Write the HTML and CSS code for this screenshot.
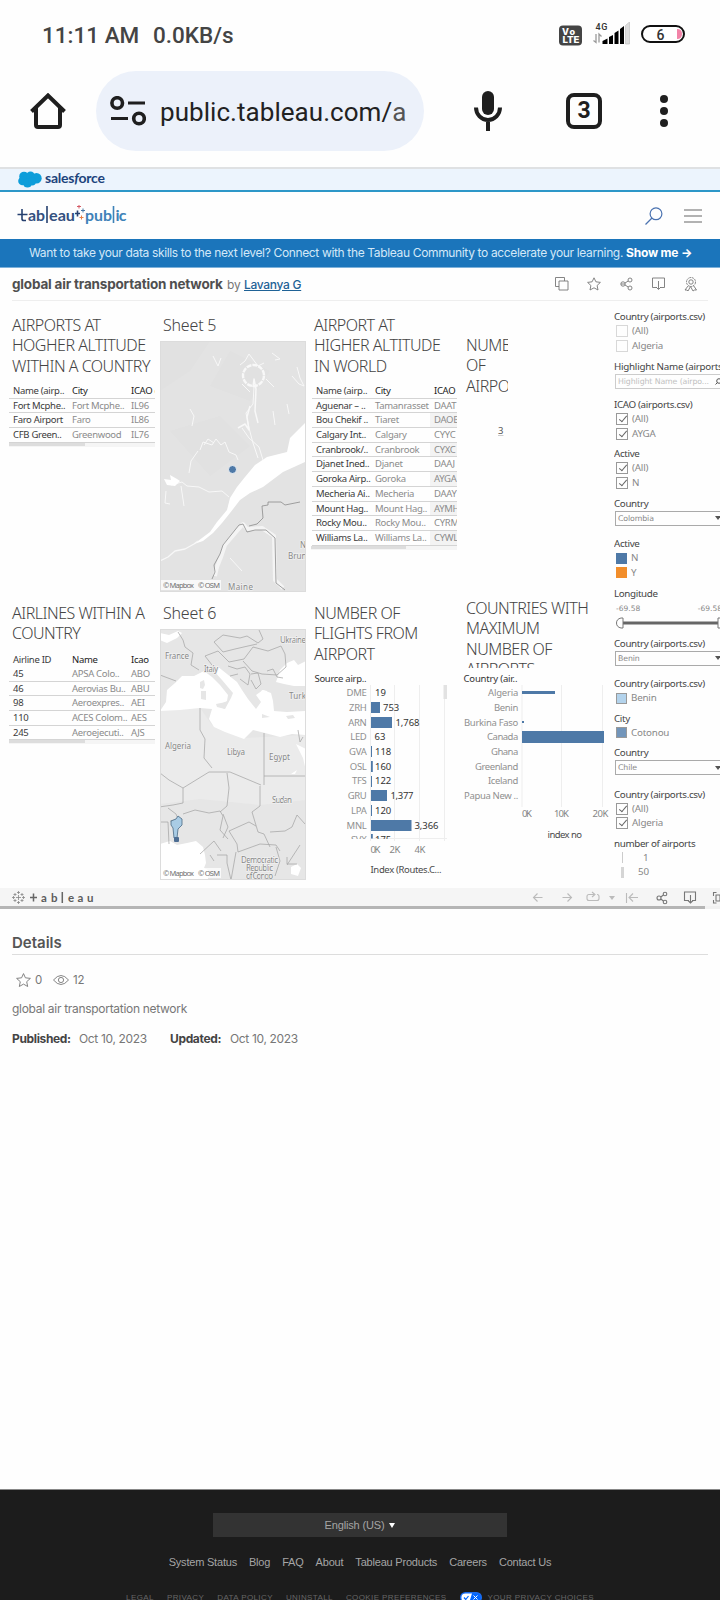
FILE: index.html
```html
<!DOCTYPE html>
<html lang="en">
<head>
<meta charset="utf-8">
<title>global air transportation network</title>
<link rel="stylesheet" href="styles.css">
</head>
<body>
<div class="status">
  <span class="clock">11:11 AM</span><span class="speed">0.0KB/s</span>
  <svg class="status-icons" width="127" height="24" viewBox="0 0 127 24">
    <rect x="0" y="3.500" width="23" height="20" rx="4" fill="#444"/>
    <g font-family="Inter" font-weight="800" fill="#fff" font-size="9"><text x="3" y="12.500" textLength="13">Vo</text><text x="3.500" y="21" textLength="17" lengthAdjust="spacingAndGlyphs">LTE</text></g>
    <text x="36.500" y="7.500" font-family="Roboto" font-size="9" font-weight="500" fill="#333" textLength="12">4G</text>
    <path d="M37 12v8.500l-2.500-2M40 20.500V12l2.500 2.500" fill="none" stroke="#999" stroke-width="1.300"/>
    <path d="M43.500 22v-3l5-2.500V22zM50 22v-7l4-2v9zM55.500 22V11l4-2.500V22zM61 22V7l4-3v18z" fill="#000"/>
    <path d="M66.500 22V3.500l4-3.500v22z" fill="#ddd" stroke="#bbb" stroke-width=".6"/>
    <rect x="83" y="4" width="42" height="16" rx="8" fill="#fff" stroke="#111" stroke-width="2"/>
    <path d="M118 7q5 0 5 5t-5 5z" fill="#f283a8"/>
    <text x="97.500" y="18" font-family="Roboto" font-size="14" fill="#333">6</text>
  </svg>
</div>
<div class="browser">
  <svg class="home" width="36" height="36" viewBox="0 0 36 36" fill="none" stroke="#1f1f1f" stroke-width="4"><path d="M1.500 18.500 18 2.500l16.500 16" /><path d="M6 15v17q0 2 2 2h20q2 0 2-2V15"/></svg>
  <div class="omnibox">
    <svg width="36" height="30" viewBox="0 0 36 30" fill="none" stroke="#1f1f1f" stroke-width="3.600"><circle cx="7.200" cy="7" r="5.300"/><path d="M18 7h17M1 22.500h17" stroke-width="3.200"/><circle cx="29" cy="22.500" r="5.300"/></svg>
    <span class="url">public.tableau.com/<span class="fade">a</span></span>
  </div>
  <svg class="mic" width="28" height="40" viewBox="0 0 28 40"><rect x="8" y="0" width="12" height="24" rx="6" fill="#1f1f1f"/><path d="M2 16.500a12 12.500 0 0 0 24 0M14 29v11" fill="none" stroke="#1f1f1f" stroke-width="4"/></svg>
  <span class="tabs">3</span>
  <svg class="dots" width="8" height="32" viewBox="0 0 8 32" fill="#1f1f1f"><circle cx="4" cy="4" r="4"/><circle cx="4" cy="16" r="4"/><circle cx="4" cy="28" r="4"/></svg>
</div>
<div class="salesforce">
  <svg width="24" height="17" viewBox="0 0 24 17" fill="#0d9dda"><circle cx="6" cy="5.500" r="4.800"/><circle cx="12.500" cy="4.800" r="4.300"/><circle cx="18.500" cy="7.200" r="5.200"/><circle cx="4.500" cy="10" r="4.300"/><circle cx="9.500" cy="12" r="4.600"/><circle cx="14" cy="10.500" r="4"/></svg>
  <span>sales<i>f</i>orce</span>
</div>
<header class="header">
  <svg class="logo" width="110" height="22" viewBox="0 0 110 22">
    <g fill="none" stroke="#26406f" stroke-width="1.600"><path d="M5 4v10q0 1.500 2 1.500h2M.5 9.500h10M30 1v17M60.500 5.500v6M58 8.500h5"/></g>
    <g font-family="Lato" font-weight="700" font-size="16"><text x="11" y="15.500" fill="#33507f" textLength="17" lengthAdjust="spacingAndGlyphs">ab</text><text x="32" y="15.500" fill="#33507f" textLength="26" lengthAdjust="spacingAndGlyphs">eau</text><text x="68" y="15.500" fill="#3e82b8" textLength="27" lengthAdjust="spacingAndGlyphs">pub</text><text x="98.500" y="15.500" fill="#3e82b8" textLength="11">ic</text></g>
    <path d="M96.500 1v17" stroke="#3e82b8" stroke-width="1.600"/>
    <path d="M60 1.500h4M62 -.5v4" stroke="#d45b67"/><path d="M62.500 12.500h4M64.500 10.500v4" stroke="#e88046"/><path d="M64 5.500h4M66 3.500v4" stroke="#4778a5"/>
  </svg>
  <svg class="search" width="18" height="18" viewBox="0 0 18 18" fill="none" stroke="#4a72b0" stroke-width="1.200"><circle cx="11" cy="6.800" r="5.900"/><path d="m7 11-6.500 6.500"/></svg>
  <svg width="18" height="14" viewBox="0 0 18 14" stroke="#666" stroke-width="1.200"><path d="M0 1h18M0 7h18M0 13h18"/></svg>
</header>
<div class="banner"><span>Want to take your data skills to the next level? Connect with the Tableau Community to accelerate your learning.</span> <b>Show me →</b></div>
<div class="title">
  <h1>global air transportation network</h1><span class="by">by</span><a>Lavanya G</a>
  <svg class="actions" width="144" height="15" viewBox="0 0 144 15" fill="none" stroke="#777" stroke-width=".9">
    <path d="M4 9.500H.5v-9h9V4M4 4h9v9H4z"/>
    <path d="m39 .8 1.900 4 4.500.6-3.300 3.100.9 4.500-4-2.200-4 2.200.9-4.500-3.300-3.100 4.500-.6z"/>
    <circle cx="68" cy="7" r="2.200"/><circle cx="75" cy="3" r="2"/><circle cx="75" cy="11" r="2"/><path d="m70 6 3.200-2M70 8l3.200 2M66 7h4"/>
    <path d="M102 10.500h-4.500V1h12v9.500H105M103.500 4v8M101 10l2.500 2.500L106 10"/>
    <circle cx="136" cy="5" r="2.200"/><circle cx="136" cy="5" r="4.500" stroke-dasharray="2 .7"/><path d="m133 9-3 4h2l1 1 2.500-4.500L138 14l1.500-1h2l-3-4.500"/>
  </svg>
</div>

<main class="dash">
  <section class="sheet">
    <h2>AIRPORTS AT<br>HOGHER ALTITUDE<br>WITHIN A COUNTRY</h2>
    <div class="table">
      <div class="tr th"><span>Name (airp..</span><span>City</span><span>ICAO code</span></div>
      <div class="tr"><span>Fort Mcphe..</span><span>Fort Mcphe..</span><span>IL96</span></div>
      <div class="tr"><span>Faro Airport</span><span>Faro</span><span>IL86</span></div>
      <div class="tr"><span>CFB Green..</span><span>Greenwood</span><span>IL76</span></div>
      <div class="scroll"><i></i></div>
    </div>
  </section>
  <section class="sheet map">
    <h2>Sheet 5</h2>
    <svg width="146" height="251" viewBox="0 0 146 251">
      <rect width="146" height="251" fill="#e3e3e3"/>
      <g fill="#e1e1e1"><path d="M0 0h50L30 30 0 50zM70 10l40 20-20 30-40-15zM10 90l50-15 30 30-40 30z"/></g>
      <path d="M145 82 139 88 130 97 127 111 107 116 95 124 85 136 77 146 70 157 67 169 57 181 50 191 42 197 34 203 43 200 53 192 62 182 70 172 80 159 90 152 103 146 123 131 145 121z" fill="#fff"/>
      <g fill="none" stroke="#f8f8f8" stroke-linejoin="round">
        <path d="m38 200-4 3-9 5-10 2-7 6-8 4" stroke-width="1.300"/><path d="m69 156-7-6-13 1-10-5-12-1-5-4-11 3M103 119l-4-13-10-9-7-10M98 117l-5-15-4-15-3-15 7-9 1-17"/>
        <path d="m40 109 3-8 9 3 4-6 5 6 4-3 4 10 7 3 2 5M44 104l4-6 6 4M29 132l2-12 7-10"/>
        <path d="m78 87 7-4 4 6-2-13 3-11M93 46l1-8 2 10-1 22 3 12" stroke-width="1.500"/>
        <path d="m30 68 4 7-2 10M53 15l5 10 3-8M112 12l8 6-5 1M132 35l7 8 5 2-4-8-3-11M113 70l2 14M127 63l2 10M6 150l-1 12 5 1M21 145l3 20M70 217l12 13M80 24l5-4 4-7 9 12 6-3M82 43l8 8M106 38l8 8"/>
        <circle cx="93.500" cy="34.500" r="10.500" stroke-width="2.400" stroke-dasharray="5 1"/>
      </g>
      <path d="m4 138 7 1-1-5 7 4 3 2-5 5-8-1z" fill="#fff"/>
      <g fill="none" stroke-linejoin="round"><path d="m55 235 2-9 4-10 4-12 18-21 4 5 15-1 12 8 1 44 8 8" stroke="#f4f4f4" stroke-width="4"/><path d="m52 238 3-7-1-7 6-11 3-9 16-20 4-1 4 8 8-2 11 0 9 8 1 45 9 7M89 185l8-2 6-6-1-12 6-1v-3h13l4 3 15-3" stroke="#8c8c8c" stroke-width=".8"/></g>
      <circle cx="72.500" cy="128.500" r="4" fill="#4e79a7" stroke="#fff" stroke-width=".8"/>
      <g class="place"><text x="68" y="249" textLength="25">Maine</text><text x="140" y="207">N</text><text x="128" y="218">Bruns</text></g>
      <rect x="1" y="239" width="60" height="10" fill="#fff" opacity=".75"/><g class="credit"><text x="3" y="247" textLength="31">© Mapbox</text><text x="38" y="247" textLength="22">© OSM</text></g>
      <rect x=".5" y=".5" width="145" height="250" fill="none" stroke="#dcdcdc"/>
    </svg>
  </section>
  <section class="sheet">
    <h2>AIRPORT AT<br>HIGHER ALTITUDE<br>IN WORLD</h2>
    <div class="table wide">
      <div class="tr th"><span>Name (airp..</span><span>City</span><span>ICAO code</span></div>
      <div class="tr"><span>Aguenar – ..</span><span>Tamanrasset</span><span>DAAT</span></div>
      <div class="tr"><span>Bou Chekif ..</span><span>Tiaret</span><span>DAOB</span></div>
      <div class="tr"><span>Calgary Int..</span><span>Calgary</span><span>CYYC</span></div>
      <div class="tr"><span>Cranbrook/..</span><span>Cranbrook</span><span>CYXC</span></div>
      <div class="tr"><span>Djanet Ined..</span><span>Djanet</span><span>DAAJ</span></div>
      <div class="tr"><span>Goroka Airp..</span><span>Goroka</span><span>AYGA</span></div>
      <div class="tr"><span>Mecheria Ai..</span><span>Mecheria</span><span>DAAY</span></div>
      <div class="tr"><span>Mount Hag..</span><span>Mount Hag..</span><span>AYMH</span></div>
      <div class="tr"><span>Rocky Mou..</span><span>Rocky Mou..</span><span>CYRM</span></div>
      <div class="tr"><span>Williams La..</span><span>Williams La..</span><span>CYWL</span></div>
      <div class="scroll"><i></i></div>
    </div>
  </section>
  <section class="sheet count">
    <h2>NUMBER<br>OF<br>AIRPORTS</h2>
    <span class="num">3</span>
  </section>

  <section class="sheet second">
    <h2>AIRLINES WITHIN A<br>COUNTRY</h2>
    <div class="table short">
      <div class="tr th"><span>Airline ID</span><span>Name</span><span>Icao</span></div>
      <div class="tr"><span>45</span><span>APSA Colo..</span><span>ABO</span></div>
      <div class="tr"><span>46</span><span>Aerovias Bu..</span><span>ABU</span></div>
      <div class="tr"><span>98</span><span>Aeroexpres..</span><span>AEI</span></div>
      <div class="tr"><span>110</span><span>ACES Colom..</span><span>AES</span></div>
      <div class="tr"><span>245</span><span>Aeroejecuti..</span><span>AJS</span></div>
      <div class="scroll"><i></i></div>
    </div>
  </section>
  <section class="sheet second map">
    <h2>Sheet 6</h2>
    <svg width="146" height="251" viewBox="0 0 146 251">
      <rect width="146" height="251" fill="#e6e6e6"/>
      <path d="M0 82 40 79l12 17 31 13 63-3v65L100 176l-60-6L0 175z" fill="#ebebeb"/>
      <path d="M0 82 6 73 7 61 15 54 22 47 34 47 44 42 52 48 60 56 68 66 67 72 57 77 65 80 71 69 73 64 62 51 54 42 57 37 67 45 77 53 82 61 88 70 96 80 101 73 96 66 103 61 111 64 113 72 114 82 127 83 145 82V106L132 105 120 108 105 104 93 101 84 110 65 103 54 98 49 90 52 80 40 79 20 81z" fill="#fff"/>
      <path d="M102 61l5 1 2 9-6 3-4-7M0 4l9 2 9-4 4 2-5 5-10 5-5-2-2-1zM116 53l4-12 7-7 7-3 4 5 8-4v25l-12 0-10-2zM0 215l10-3 7 4 10-2 9-2 7 6 2 8 1 8-2 5 4 2v11l-12-2H0zM136 115l7 14 3 13v-22zM131 145l6-4-2 4zM131 238l6-3 4 4-3 8-7-2z" fill="#fff"/>
      <path d="m40 53 4-2 1 5-2 4-3-1zM41 62l5 0 0 9-5-1zM56 75l10-2-1 7-8-2zM102 85l8 3-8 1zM126 87l7-1 2 3-7 1z" fill="#e6e6e6"/>
      <g fill="none" stroke="#a5a5a5" stroke-width=".75" stroke-linejoin="round">
        <path d="m18 3 5 8 2 7 8 6-2 12 8 5M0 46l16 6M54 13l9-7 17 3 7-2 11 7 5-4-4-9M54 13l9 10 12-3 13-3 9-2M45 27l13-5 11 11 15-3 9-12 15 4 13-5 4 8 1 13-9 8-15-1-10-3-9-10M68 37l9 3 8-2 5 7-2 11-8-6M91 45l7-1 3 11-5 5-5-9M107 42l6-2 4 8 6 1M40 79l0 22 5 9-1 19 8 10M104 104v52M104 147h42M0 144l9 7 14 8 26-16h21l31 13M23 159v15l-10 2-14 2M23 185l12-4 14 3 11-2 3 5-3 14 8 9M67 144l2 15-2 18-7 6M100 157v20l-8 6 6 20 6 2 6 13M63 185l5 13-5 11M69 202l20-9 7 4M69 202l8 13 1 8 22-8 16 1 4 6M110 203l15-1 7-4 5-12 8 9M40 225l14-13 7 10M50 226l4 6M57 226h10v8l4 17M76 223l-5 28M116 218l4 14-5 15M127 236l13-20M8 179l8 6 2 5-8 2M0 193l8 0 1 22M138 101l2 12 3-5M127 228v7h10M70 47l8-2M45 27l7 9"/>
      </g>
      <path d="M18 187 22 190 22 196 18 200 17 209 14 209 13 199 11 196 11 192 16 190z" fill="#a9cce5" stroke="#4a6984" stroke-width=".8"/><rect x="14" y="208" width="5" height="5" rx="1" fill="#4d6d93"/>
      <g class="place"><text x="5" y="29.500" textLength="24">France</text><text x="44" y="43" textLength="14">Italy</text><text x="120" y="14" textLength="26">Ukraine</text><text x="129" y="70" textLength="17">Turk</text><text x="5" y="119.500" textLength="26">Algeria</text><text x="67" y="125.500" textLength="18">Libya</text><text x="109" y="130.500" textLength="21">Egypt</text><text x="112" y="174" textLength="20">Sudan</text><text x="81" y="233.500" textLength="37">Democratic</text><text x="86" y="242" textLength="27">Republic</text><text x="86" y="250" textLength="27">of Congo</text></g>
      <rect x="1" y="239" width="60" height="10" fill="#fff" opacity=".75"/><g class="credit"><text x="3" y="247" textLength="31">© Mapbox</text><text x="38" y="247" textLength="22">© OSM</text></g>
      <rect x=".5" y=".5" width="145" height="250" fill="none" stroke="#dcdcdc"/>
    </svg>
  </section>
  <section class="sheet second">
    <h2>NUMBER OF<br>FLIGHTS FROM<br>AIRPORT</h2>
    <svg class="chart" width="146" height="208" viewBox="311 672 146 208">
      <text class="dark" x="314.500" y="681.800" textLength="52" >Source airp..</text>
      <path d="M370.500 685v156M394.500 685v156M419.500 685v156M444.500 685v156M370 838.500h77" stroke="#eee"/>
      <rect x="443.500" y="685" width="3.500" height="14" fill="#e2e2e2"/>
      <g fill="#4e79a7"><path d="M371 702h9v11h-9zM371 717h21v11h-21zM371 746h1v11h-1zM371 761h1.800v11H371zM371 776h1v11h-1zM371 790h16v11h-16zM371 805h1v11h-1zM371 820h40.500v11H371zM371 834h1.800v4.500H371z"/></g>
      <g class="lab"><text x="366.500" y="696">DME</text><text x="366.500" y="711">ZRH</text><text x="366.500" y="725.500">ARN</text><text x="366.500" y="740">LED</text><text x="366.500" y="755">GVA</text><text x="366.500" y="769.500">OSL</text><text x="366.500" y="784">TFS</text><text x="366.500" y="799">GRU</text><text x="366.500" y="813.500">LPA</text><text x="366.500" y="828.500">MNL</text></g>
      <g class="val"><text x="375" y="696">19</text><text x="383" y="711">753</text><text x="395.500" y="725.500" textLength="24">1,768</text><text x="374.500" y="740">63</text><text x="375" y="755">118</text><text x="375" y="769.500">160</text><text x="375" y="784">122</text><text x="390.500" y="799" textLength="23">1,377</text><text x="375" y="813.500">120</text><text x="414.500" y="828.500" textLength="24">3,366</text></g>
      <svg x="311" y="832" width="132" height="7" viewBox="311 832 132 7"><g class="lab"><text x="366.500" y="843">SVX</text></g><g class="val"><text x="375" y="843">175</text></g></svg>
      <g class="axis"><text x="370.500" y="853" textLength="10">0K</text><text x="389.500" y="853" textLength="11">2K</text><text x="414.500" y="853" textLength="11">4K</text></g>
      <text class="dark soft" x="370.500" y="873" textLength="71">Index (Routes.C...</text>
    </svg>
  </section>
  <section class="sheet second countries">
    <h2>COUNTRIES WITH<br>MAXIMUM<br>NUMBER OF<br>AIRPORTS</h2>
    <svg class="chart" width="153" height="208" viewBox="461 672 153 208">
      <text class="dark" x="463.500" y="681.800" textLength="54">Country (air..</text>
      <path d="M522 685v122M561.500 685v122M602.500 685v122" stroke="#eee"/>
      <path d="M522 691h33v3h-33zM522 721h2v2h-2zM522 731h82v12h-82z" fill="#4e79a7"/>
      <g class="lab"><text x="518" y="696" textLength="30">Algeria</text><text x="518" y="711" textLength="24">Benin</text><text x="518" y="725.500" textLength="54">Burkina Faso</text><text x="518" y="740" textLength="31">Canada</text><text x="518" y="755" textLength="27">Ghana</text><text x="518" y="769.500" textLength="43">Greenland</text><text x="518" y="784" textLength="30">Iceland</text><text x="518" y="799" textLength="54">Papua New ..</text></g>
      <g class="axis"><text x="522" y="817" textLength="10">0K</text><text x="554" y="817" textLength="15">10K</text><text x="592.500" y="817" textLength="16">20K</text></g>
      <text class="dark soft" x="547.500" y="838" textLength="34.500">index no</text>
    </svg>
  </section>

  <aside class="filters">
    <div><h3>Country (airports.csv)</h3><p><i class="cb"></i>(All)</p><p><i class="cb"></i>Algeria</p></div>
    <div><h3 class="long">Highlight Name (airports.csv)</h3><div class="field hint"><span>Highlight Name (airpo...</span><svg width="7" height="7" viewBox="0 0 7 7" fill="none" stroke="#555"><circle cx="4" cy="3" r="2.300"/><path d="m2.500 4.500-2 2"/></svg></div></div>
    <div><h3>ICAO (airports.csv)</h3><p><i class="cb on"></i>(All)</p><p><i class="cb on"></i>AYGA</p></div>
    <div><h3>Active</h3><p><i class="cb on"></i>(All)</p><p><i class="cb on"></i>N</p></div>
    <div><h3>Country</h3><div class="field"><span>Colombia</span><b></b></div></div>
    <div><h3>Active</h3><p><i class="sw blue"></i>N</p><p><i class="sw orange"></i>Y</p></div>
    <div><h3>Longitude</h3><div class="range"><span>-69.58</span><span>-69.58</span></div><svg width="106" height="14" viewBox="0 0 106 14"><path d="M9 7h96" stroke="#666" stroke-width="3"/><path d="M9 2H7Q2.500 3 2.500 7T7 12h2zM104 2h3v10h-3z" fill="#fff" stroke="#777"/></svg></div>
    <div><h3>Country (airports.csv)</h3><div class="field"><span>Benin</span><b></b></div></div>
    <div><h3>Country (airports.csv)</h3><p><i class="sw pale"></i>Benin</p></div>
    <div><h3>City</h3><p><i class="sw steel"></i>Cotonou</p></div>
    <div><h3>Country</h3><div class="field"><span>Chile</span><b></b></div></div>
    <div><h3>Country (airports.csv)</h3><p><i class="cb on"></i>(All)</p><p><i class="cb on"></i>Algeria</p></div>
    <div><h3>number of airports</h3><p class="size"><i></i>1</p><p class="size big"><i></i>50</p></div>
  </aside>
</main>
<div class="toolbar">
  <svg width="13" height="13" viewBox="0 0 13 13" stroke="#888" stroke-width=".8"><path d="M6.500 4v5M4 6.500h5M6.500 0v3M5 1.500h3M6.500 10v3M5 11.500h3M1.500 5v3M0 6.500h3M11.500 5v3M10 6.500h3M3 2v3M1.500 3.500h3M10 2v3M8.500 3.500h3M3 8v3M1.500 9.500h3M10 8v3M8.500 9.500h3"/></svg>
  <svg class="word" width="66" height="13" viewBox="0 0 66 13"><path d="M4.500 2.500v8M1 6.500h7M33.300 1v11" stroke="#666" stroke-width="1.500"/><g font-family="Lato" font-weight="700" font-size="11.500" fill="#5c5c5c"><text x="12" y="10.500">a</text><text x="22" y="10.500">b</text><text x="39" y="10.500">e</text><text x="48.500" y="10.500">a</text><text x="58" y="10.500">u</text></g></svg>
  <svg class="tools" width="188" height="15" viewBox="0 0 188 15" fill="none" stroke="#bbb" stroke-width="1.100">
    <path d="M10.500 7.500h-9M5.500 3.500l-4 4 4 4M30.500 7.500h9M35.500 3.500l4 4-4 4M62 4.500h-5q-2 0-2 2v2q0 2 2 2h8q2 0 2-2v-2q0-2-2-2M60 2l3 2.500L60 7M94.500 3v10M106 7.500h-9M101 3.500l-4 4 4 4"/><path d="M77 6h6l-3 4z" fill="#bbb" stroke="none"/>
    <g stroke="#777"><circle cx="127" cy="8" r="2"/><circle cx="133" cy="4" r="1.800"/><circle cx="133" cy="12" r="1.800"/><path d="m128.800 7 2.600-2M128.800 9l2.600 2"/><path d="M157 10.500h-4.500V2h11v8.500H160M158.500 5v8M156 10.500l2.500 2.500 2.500-2.500"/><path d="M181.500 6V2.500h3M181.500 10v3h3M184 5h4v6h-4z"/></g>
  </svg>
</div>
<div class="hscroll"><i></i></div>
<section class="details">
  <h2>Details</h2>
  <div class="stats">
    <svg width="15" height="14" viewBox="31.500 .2 15 14" fill="none" stroke="#777" stroke-width=".9"><path d="m39 .8 1.900 4.200 5 .6-3.700 3.300 1 4.800-4.200-2.400-4.200 2.400 1-4.800-3.700-3.300 5-.6z"/></svg><span class="s0">0</span>
    <svg width="16" height="10" viewBox="0 0 16 10" fill="none" stroke="#777" stroke-width=".9"><path d="M.5 5q7.500-9 15 0-7.500 9-15 0z"/><circle cx="8" cy="5" r="2.600"/></svg><span class="s1">12</span>
  </div>
  <p class="desc">global air transportation network</p>
  <p class="dates"><b>Published:</b><span>Oct 10, 2023</span><b class="upd">Updated:</b><span>Oct 10, 2023</span></p>
</section>
<footer>
  <div class="lang">English (US) <i></i></div>
  <nav><a>System Status</a><a>Blog</a><a>FAQ</a><a>About</a><a>Tableau Products</a><a>Careers</a><a>Contact Us</a></nav>
  <nav class="legal"><a>LEGAL</a><a>PRIVACY</a><a>DATA POLICY</a><a>UNINSTALL</a><a>COOKIE PREFERENCES</a><svg width="22" height="11" viewBox="0 0 22 11"><rect x=".7" y=".7" width="20.600" height="9.600" rx="4.800" fill="#06f" stroke="#1a6cf0" stroke-width="1.400"/><path d="M5.500 1.400H12L9.500 9.600h-4a4 4 0 0 1 0-8.200" fill="#fff"/><path d="m4 5.500 1.700 2L8.500 4" fill="none" stroke="#06f" stroke-width="1.200"/><path d="m13.500 3.500 4 4m0-4-4 4" stroke="#fff"/></svg><a class="choices">YOUR PRIVACY CHOICES</a></nav>
</footer>
</body>
</html>
```
FILE: styles.css
```css
* { box-sizing: border-box; }
html, body { overflow: hidden; }
body { margin: 0; width: 720px; height: 1600px; background: #fefefe; font-family: Inter, sans-serif; color: #555; display: flex; flex-direction: column; }
h1, h2, h3, p { margin: 0; font-weight: 400; }
svg { display: block; flex: none; }

.status { height: 71px; display: flex; align-items: flex-start; padding: 22px 0 0 42px; font: 500 22.500px/27px Roboto, sans-serif; color: #444; white-space: nowrap; }
.clock { width: 111px; flex: none; }
.speed { width: 406px; flex: none; }
.browser { height: 96px; display: flex; align-items: flex-start; padding-left: 30px; }
.home { margin-top: 22px; }
.omnibox { width: 328px; height: 80px; border-radius: 40px; background: #ecf1fa; margin-left: 30px; display: flex; align-items: center; padding-left: 14px; }
.url { margin-left: 14px; font: 400 26px/30px Roboto, sans-serif; color: #222; padding-top: 2px; letter-spacing: .05px; }
.fade { color: #555; }
.mic { margin: 20px 0 0 50px; }
.tabs { width: 36px; height: 36px; border: 4px solid #1f1f1f; border-radius: 8px; margin: 22px 0 0 64px; font: 700 23px/28px Roboto, sans-serif; color: #1f1f1f; text-align: center; }
.dots { margin: 24px 0 0 58px; }

.salesforce { height: 25px; border-top: 2px solid #dfe1e3; border-bottom: 2px solid #2d97c8; background: #ecf4fd; display: flex; align-items: center; padding-left: 18px; color: #1c437c; font: 400 14px/18px Lato, sans-serif; }
.salesforce span { margin: -3px 0 0 3px; font-weight: 700; letter-spacing: -.25px; }
.header { height: 47px; display: flex; align-items: center; padding-left: 17px; }
.search { margin: 0 21px 0 518px; }
.banner { height: 29px; background: #1b75bb; color: #d3e8f8; font-size: 12px; line-height: 28px; white-space: nowrap; padding-left: 29px; border-bottom: 1px solid #7db1da; letter-spacing: -.35px; }
.banner b { color: #fff; font-weight: 700; letter-spacing: -.2px; }
.title { height: 33px; margin: 0 12px; border-bottom: 1px solid #eee; display: flex; align-items: center; white-space: nowrap; }
h1 { font-size: 13.500px; font-weight: 700; letter-spacing: -.18px; color: #4f4f4f; width: 215px; flex: none; }
.by { font-size: 12px; color: #777; width: 17px; flex: none; }
.title a { font-size: 12px; color: #1f6296; font-weight: 500; text-decoration: underline; letter-spacing: -.3px; }
.actions { margin: 0 9px 0 auto; }

.dash { height: 587px; display: grid; grid-template-columns: 151px 151px 150px 153px 106px; grid-template-rows: 293px 294px; padding-left: 9px; font-family: "Noto Sans", sans-serif; }
.sheet { padding-top: 14px; overflow: hidden; }
.sheet h2 { font: 300 16px/20.400px "Noto Sans", "Open Sans", sans-serif; letter-spacing: -.5px; color: #444; padding-left: 3px; height: 69px; white-space: nowrap; }
.second { padding-top: 9px; }
.map h2 { height: 26px; letter-spacing: -.2px; }
.table { width: 146px; overflow: hidden; font-size: 9.500px; }
.tr { display: grid; grid-template-columns: 59px 59px 60px; height: 14.700px; line-height: 13.600px; border-bottom: 1px solid #d4d4d4; color: #8b8b8b; letter-spacing: -.3px; }
.tr span { padding-left: 4px; white-space: nowrap; }
.tr span:first-child { color: #3a3a3a; }
.th, .th span { color: #222; }
.wide .tr { margin-left: 1px; }
.wide .tr:nth-child(2n+3) span:last-child { background: #f3f3f3; }
.short { margin-top: -19px; }
.short .th { border-color: transparent; height: 14px; }
.scroll { height: 4px; background: #f5f5f5; }
.scroll i { display: block; width: 76px; height: 3px; background: #ddd; }
.wide .scroll i { width: 95px; }
.count { padding: 34px 106px 0 2px; }
.count h2 { overflow: hidden; }
.num { display: block; margin: 20px 0 0 35px; font-size: 9.500px; line-height: 14px; text-decoration: underline #ccc; }
.sheet.countries { padding-top: 4px; }
.countries h2 { height: 70px; overflow: hidden; padding-left: 5px; }
.chart text { font: 400 9.500px "Noto Sans", sans-serif; }
.countries .chart { margin-top: 4px; }
.dark { fill: #333; }
.soft { fill: #4a4a4a; }
.lab { fill: #909090; text-anchor: end; letter-spacing: -.3px; }
.val { fill: #333; }
.axis { fill: #858585; }
.place { font: 400 8px "Noto Sans", sans-serif; fill: #888; paint-order: stroke; stroke: #f0f0f0; stroke-width: 1.500px; }
.credit { font: 400 7.500px "Noto Sans", sans-serif; fill: #707070; }

.filters { grid-column: 5; grid-row: 1 / 3; overflow: hidden; padding-top: 8px; display: grid; grid-template-rows: 49.500px 38.500px 49px 49.500px 40.500px 50px 49.500px 40.500px 34.500px 34.500px 41.500px 49px 50px; font-size: 9.800px; white-space: nowrap; }
h3 { font-size: 9.800px; line-height: 15px; color: #444; letter-spacing: -.35px; }
.filters .long { letter-spacing: -.25px; }
.filters p { display: flex; align-items: center; height: 14.600px; line-height: 14px; color: #888; padding-left: 2px; letter-spacing: -.2px; }
.cb { width: 12px; height: 12px; border: 1px solid #d8d8d8; margin-right: 4px; position: relative; }
.cb.on { border-color: #999; }
.cb.on::after { content: ""; position: absolute; left: 3.500px; top: 0; width: 3px; height: 7px; border: solid #666; border-width: 0 1.300px 1.300px 0; transform: rotate(40deg); }
.sw { width: 11px; height: 11px; margin-right: 4px; }
.blue { background: #4e79a7; }
.orange { background: #f28e2b; }
.pale { background: #b3d3ec; border: 1px solid #999; }
.steel { background: #7295ba; border: 1px solid #999; }
.field { width: 130px; height: 15px; border: 1px solid #aaa; margin: 0 0 0 1px; display: flex; align-items: center; font-size: 7.800px; color: #888; padding-left: 2px; font-family: "DejaVu Sans", sans-serif; }
.field span { width: 97px; letter-spacing: -.1px; }
.field b { border: 3px solid transparent; border-top: 4px solid #555; border-bottom: 0; }
.hint { color: #c0c0c0; border-color: #ccc; }
.range { display: flex; justify-content: space-between; width: 108px; padding-left: 2px; font: 400 7.500px/15px "DejaVu Sans", sans-serif; color: #888; }
.filters .size { padding-left: 8px; }
.size i { width: 1px; height: 11px; background: #ccc; margin-right: 20px; }
.size.big i { width: 3px; background: #d5d5d5; margin: 0 14px 0 -1px; }

.toolbar { height: 18px; background: #f5f5f5; display: flex; align-items: center; padding-left: 12px; overflow: hidden; }
.word { margin-left: 4px; }
.tools { margin-left: 437px; }
.hscroll { height: 3px; background: #f1f1f1; }
.hscroll i { display: block; width: 705px; height: 3px; background: #b5b5b5; }
.details { margin: 0 12px; padding-top: 22px; flex: 1; }
.details h2 { font-size: 15px; font-weight: 600; line-height: 24px; color: #555; height: 24px; border-bottom: 1px solid #ddd; }
.stats { display: flex; align-items: center; padding: 16px 0 0 4px; height: 34px; font-size: 11.500px; color: #777; letter-spacing: -.3px; }
.s0 { width: 22px; padding-left: 4px; }
.s1 { padding-left: 4px; }
.desc { font-size: 12px; line-height: 16px; margin-top: 12px; color: #777; letter-spacing: -.3px; }
.dates { font-size: 12px; line-height: 16px; margin-top: 14px; display: flex; color: #777; letter-spacing: -.35px; }
.dates b { width: 67px; color: #444; }
.dates span { width: 91px; white-space: nowrap; }
.dates .upd { width: 60px; }

footer { height: 111px; flex: none; border-top: 1px solid #888; background: #1c1c1c; color: #a5a5a5; padding-top: 23px; overflow: hidden; font: 400 11px/14px "Liberation Sans", sans-serif; letter-spacing: -.15px; }
.lang { width: 294px; height: 24px; margin: 0 auto; background: #333; display: flex; align-items: center; justify-content: center; }
.lang i { border: 3px solid transparent; border-top: 5px solid #fff; border-bottom: 0; margin-left: 5px; }
nav { display: flex; justify-content: center; gap: 12px; margin-top: 18px; white-space: nowrap; letter-spacing: -.2px; }
.legal { margin-top: 23px; gap: 13px; font-size: 8px; color: #666; letter-spacing: .4px; line-height: 11px; }
.choices { margin-left: -7px; }
```
